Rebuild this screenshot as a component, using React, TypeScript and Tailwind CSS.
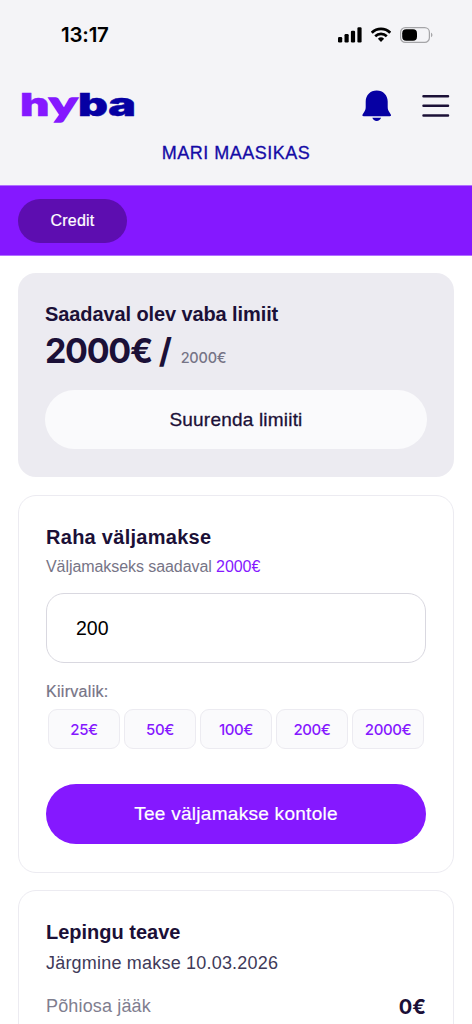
const QUICK_AMOUNTS = ["25€", "50€", "100€", "200€", "2000€"];

const StatusBar = () => (
  <div className="flex h-[70px] items-center justify-between pl-[61px] pr-[39px]">
    <span className="mt-[1px] font-['Inter'] text-[20.5px] font-semibold tracking-[-0.2px] text-black">13:17</span>
    <div className="flex items-center">
      <svg width="24" height="16" viewBox="0 0 24 16" fill="black">
        <rect x="0" y="10" width="4.2" height="5.5" rx="1.2" />
        <rect x="6.5" y="7" width="4.2" height="8.5" rx="1.2" />
        <rect x="12.9" y="3.8" width="4.2" height="11.7" rx="1.2" />
        <rect x="19.4" y="0.3" width="4.2" height="15.2" rx="1.2" />
      </svg>
      <svg className="ml-[9px]" width="20" height="16" viewBox="0 0 20 16" fill="none" stroke="black">
        <path d="M0.8 5.7a13.2 13.2 0 0 1 18.4 0" strokeWidth="2.7" />
        <path d="M4.2 9.2a8.4 8.4 0 0 1 11.6 0" strokeWidth="2.6" />
        <path d="M10 15 6.9 11.8a4.5 4.5 0 0 1 6.2 0Z" fill="black" stroke="none" />
      </svg>
      <svg className="ml-[9px]" width="33" height="16" viewBox="0 0 33 16" fill="none">
        <rect x="0.6" y="0.6" width="28.8" height="14.8" rx="4.7" stroke="#a5a5a8" strokeWidth="1.2" />
        <rect x="2.2" y="2.2" width="14.8" height="11.6" rx="4" fill="black" />
        <path d="M31 5.8c1.9.7 1.9 3.7 0 4.4Z" fill="#a5a5a8" />
      </svg>
    </div>
  </div>
);

const Logo = () => (
  <svg width="122" height="52" viewBox="0 -4 122 52" className="overflow-visible font-black">
    <g fill="#8518ff" stroke="#8518ff" strokeWidth="0.5">
      <text x="3" y="32" fontSize="32" className="font-['Inter']" textLength="29.5" lengthAdjust="spacingAndGlyphs">
        h
      </text>
      <text x="32" y="31.5" fontSize="34" strokeWidth="1.3" className="font-['Lato']" textLength="28.5" lengthAdjust="spacingAndGlyphs">
        y
      </text>
    </g>
    <g fill="#0600a3" stroke="#0600a3" strokeWidth="0.5" className="font-['Inter']">
      <text x="61" y="32" fontSize="32" textLength="58" lengthAdjust="spacingAndGlyphs">
        ba
      </text>
    </g>
  </svg>
);

const BellIcon = () => (
  <svg width="30" height="32" viewBox="0 0 30 32" fill="#0600a3">
    <path d="M14.7.5C8.2.5 3.7 5.3 3.7 11.5v5.6c0 2.2-.6 3.3-1.4 4.6L.6 24.6c-.6 1.2-.1 1.7 1.1 1.7h26c1.2 0 1.7-.5 1.1-1.7l-1.7-2.9c-.8-1.3-1.4-2.4-1.4-4.6v-5.6C25.7 5.3 21.2.5 14.7.5Z" />
    <path d="M10.3 27.7h8.8c-.7 2-2.3 3.2-4.4 3.2s-3.7-1.2-4.4-3.2Z" />
  </svg>
);

const MenuIcon = () => (
  <svg width="28" height="24" viewBox="0 0 28 24" stroke="#1b1037" strokeWidth="2.5" strokeLinecap="round">
    <path d="M1.5 2.2h24.5M1.5 11.8h24.5M1.5 21.4h24.5" />
  </svg>
);

const Header = () => (
  <header className="h-[185px] bg-[#f4f4f7]">
    <StatusBar />
    <div className="flex h-[72px] items-center justify-between pl-[17px] pr-[22px]">
      <Logo />
      <div className="flex items-center gap-[30px]">
        <BellIcon />
        <MenuIcon />
      </div>
    </div>
    <div className="text-center text-[18px] leading-[22px] tracking-[0.48px] text-[#140ba6] [-webkit-text-stroke:0.3px]">
      MARI MAASIKAS
    </div>
  </header>
);

const LimitCard = () => (
  <section className="h-[204px] rounded-[18px] bg-[#ecebf1] px-[27px] pt-[28px]">
    <h2 className="text-[20px] leading-[26px] font-bold tracking-[-0.1px]">Saadaval olev vaba limiit</h2>
    <div className="flex h-[48px] items-baseline whitespace-nowrap">
      <span className="font-['Inter'] text-[34px] leading-[48px] font-bold tracking-[-1.3px]">2000€ /</span>
      <span className="ml-[10px] font-['Inter'] text-[14.5px] font-medium tracking-[-0.2px] text-[#767486]">2000€</span>
    </div>
    <button className="mt-[15px] h-[59px] w-full rounded-full bg-[#fafafc] pt-[2px] text-[19px] tracking-[0.2px] [-webkit-text-stroke:0.3px]">
      Suurenda limiiti
    </button>
  </section>
);

const WithdrawCard = () => (
  <section className="mt-[18px] h-[378px] rounded-[18px] border border-[#ecebf1] bg-white px-[27px] pt-[28px]">
    <h2 className="text-[20px] leading-[26px] font-bold tracking-[0.28px]">Raha väljamakse</h2>
    <p className="mt-[5px] text-[16px] leading-[24px] tracking-[-0.07px] text-[#767486]">
      Väljamakseks saadaval <span className="text-[#8518ff]">2000€</span>
    </p>
    <input
      className="mt-[14px] block h-[70px] w-full rounded-[18px] border border-[#d9d8e0] bg-white px-[29px] text-[19.5px] text-black outline-none"
      defaultValue="200"
    />
    <div className="mt-[17px] text-[16px] leading-[24px] tracking-[0.3px] text-[#767486] [-webkit-text-stroke:0.2px]">
      Kiirvalik:
    </div>
    <div className="mt-[5px] grid grid-cols-5 gap-[4px] px-[2px]">
      {QUICK_AMOUNTS.map((amount) => (
        <button
          key={amount}
          className="h-[40px] rounded-[9px] border border-[#ecebf1] bg-[#fafafc] pt-[2px] font-['Inter'] text-[15px] font-medium tracking-[-0.4px] text-[#8518ff]"
        >
          {amount}
        </button>
      ))}
    </div>
    <button className="mt-[35px] h-[60px] w-full rounded-full bg-[#8518ff] text-[19px] tracking-[0.28px] text-white [-webkit-text-stroke:0.2px]">
      Tee väljamakse kontole
    </button>
  </section>
);

const ContractCard = () => (
  <section className="mt-[17px] h-[200px] rounded-[18px] border border-[#ecebf1] bg-white px-[27px] pt-[28px]">
    <h2 className="text-[20px] leading-[26px] font-bold">Lepingu teave</h2>
    <p className="mt-[4px] text-[18px] leading-[28px] tracking-[0.2px] text-[#403a59]">Järgmine makse 10.03.2026</p>
    <div className="mt-[13px] flex items-center justify-between leading-[28px]">
      <span className="text-[18px] tracking-[0.15px] text-[#807e8f]">Põhiosa jääk</span>
      <span className="mt-[3px] font-['Inter'] text-[20px] font-bold">0€</span>
    </div>
  </section>
);

const App = () => {
  return (
    <div className="h-[1024px] w-[472px] overflow-hidden bg-white font-['Liberation_Sans',sans-serif] text-[#1b1037]">
      <Header />
      <nav className="flex h-[71px] items-center border-y border-[#b070ff] bg-[#8518ff] px-[18px]">
        <button className="h-[44px] w-[109px] rounded-full bg-[#5d0db0] text-[16px] tracking-[0.2px] text-white [-webkit-text-stroke:0.2px]">
          Credit
        </button>
      </nav>
      <main className="px-[18px] pt-[17px]">
        <LimitCard />
        <WithdrawCard />
        <ContractCard />
      </main>
    </div>
  );
};

export default App;
